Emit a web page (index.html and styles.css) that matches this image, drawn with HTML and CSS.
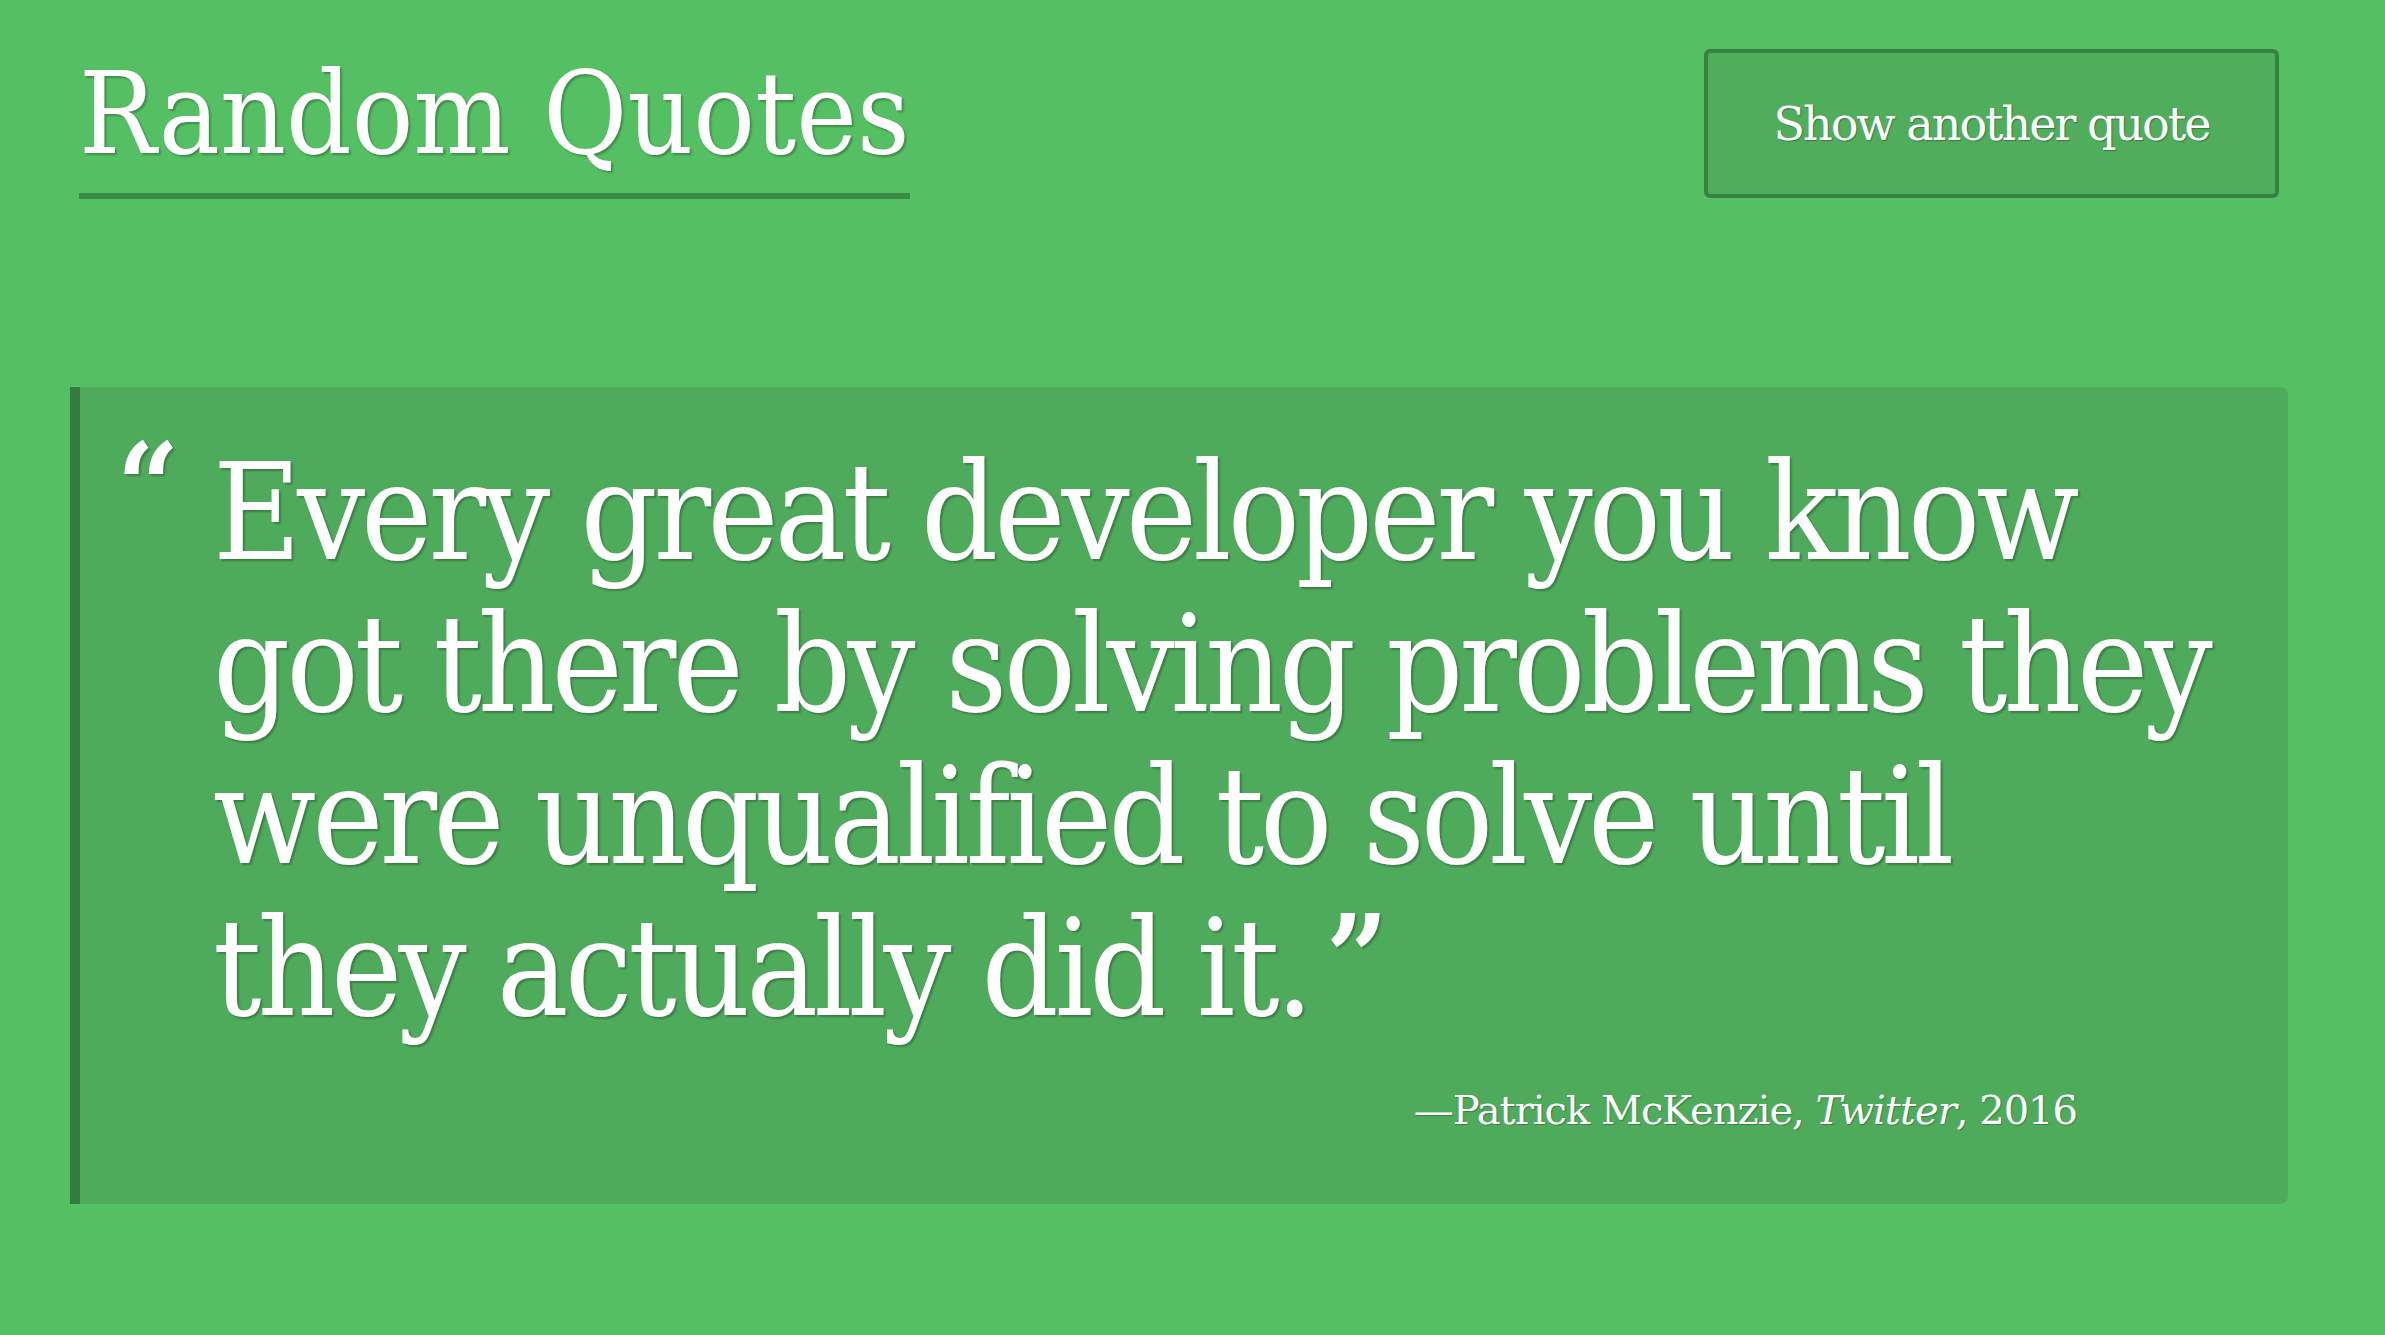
FILE: index.html
```html
<!DOCTYPE html>
<html lang="en">
<head>
<meta charset="utf-8">
<title>Random Quotes</title>
<link rel="stylesheet" href="styles.css">
</head>
<body>
<div class="page">
  <header class="header">
    <h1 class="title">Random Quotes</h1>
    <button class="btn" type="button">Show another quote</button>
  </header>
  <blockquote class="quote">
    <p class="quote-text"><span class="open">“</span>Every great developer you know got there by solving problems they were unqualified to solve until they actually did it.<span class="close">”</span></p>
    <p class="cite">—Patrick McKenzie, <em>Twitter</em>, 2016</p>
  </blockquote>
</div>
</body>
</html>
```

FILE: styles.css
```css
html, body {
  margin: 0;
  padding: 0;
  background: #55bf63;
  color: #ffffff;
  font-family: "DejaVu Serif", "Liberation Serif", serif;
}
.page {
  padding: 49px 97px 0 70px;
}
.header {
  display: flex;
  justify-content: space-between;
  align-items: flex-start;
}
.title {
  margin: 0 0 0 9px;
  padding-bottom: 14px;
  font-family: "DejaVu Serif Condensed", "DejaVu Serif", serif;
  font-stretch: condensed;
  font-size: 114px;
  font-weight: normal;
  line-height: 130px;
  border-bottom: 6px solid #3a8a46;
  text-shadow: 2px 2px 2px rgba(0, 0, 0, 0.25);
  letter-spacing: 0;
}
.btn {
  width: 575px;
  height: 149px;
  margin-right: 9px;
  background: #4fad5c;
  border: 4px solid #37823f;
  border-radius: 6px;
  color: #ffffff;
  font-family: "DejaVu Serif", "Liberation Serif", serif;
  font-size: 46px;
  letter-spacing: -2px;
  text-shadow: 1px 1px 1px rgba(0, 0, 0, 0.3);
}
.quote {
  margin: 188px 0 0 0;
  background: #4fab5c;
  border-left: 10px solid #357a3e;
  border-radius: 0 8px 8px 0;
  padding: 50px 60px 70px 133px;
  height: 817px;
  box-sizing: border-box;
}
.quote-text {
  margin: 0;
  position: relative;
  font-family: "DejaVu Serif Condensed", "DejaVu Serif", serif;
  font-stretch: condensed;
  font-size: 134px;
  line-height: 152px;
  letter-spacing: -4px;
  text-shadow: 2px 2px 2px rgba(0, 0, 0, 0.25);
}
.open {
  position: absolute;
  left: -96px;
  top: -26px;
  font-size: 120px;
  font-weight: bold;
  letter-spacing: 0;
}
.close {
  position: relative;
  top: -14px;
  font-size: 120px;
  font-weight: bold;
  margin-left: 16px;
  letter-spacing: 0;
}
.cite {
  margin: 38px 151px 0 0;
  text-align: right;
  font-size: 40px;
  letter-spacing: -1px;
  text-shadow: 1px 1px 1px rgba(0, 0, 0, 0.25);
}
```
